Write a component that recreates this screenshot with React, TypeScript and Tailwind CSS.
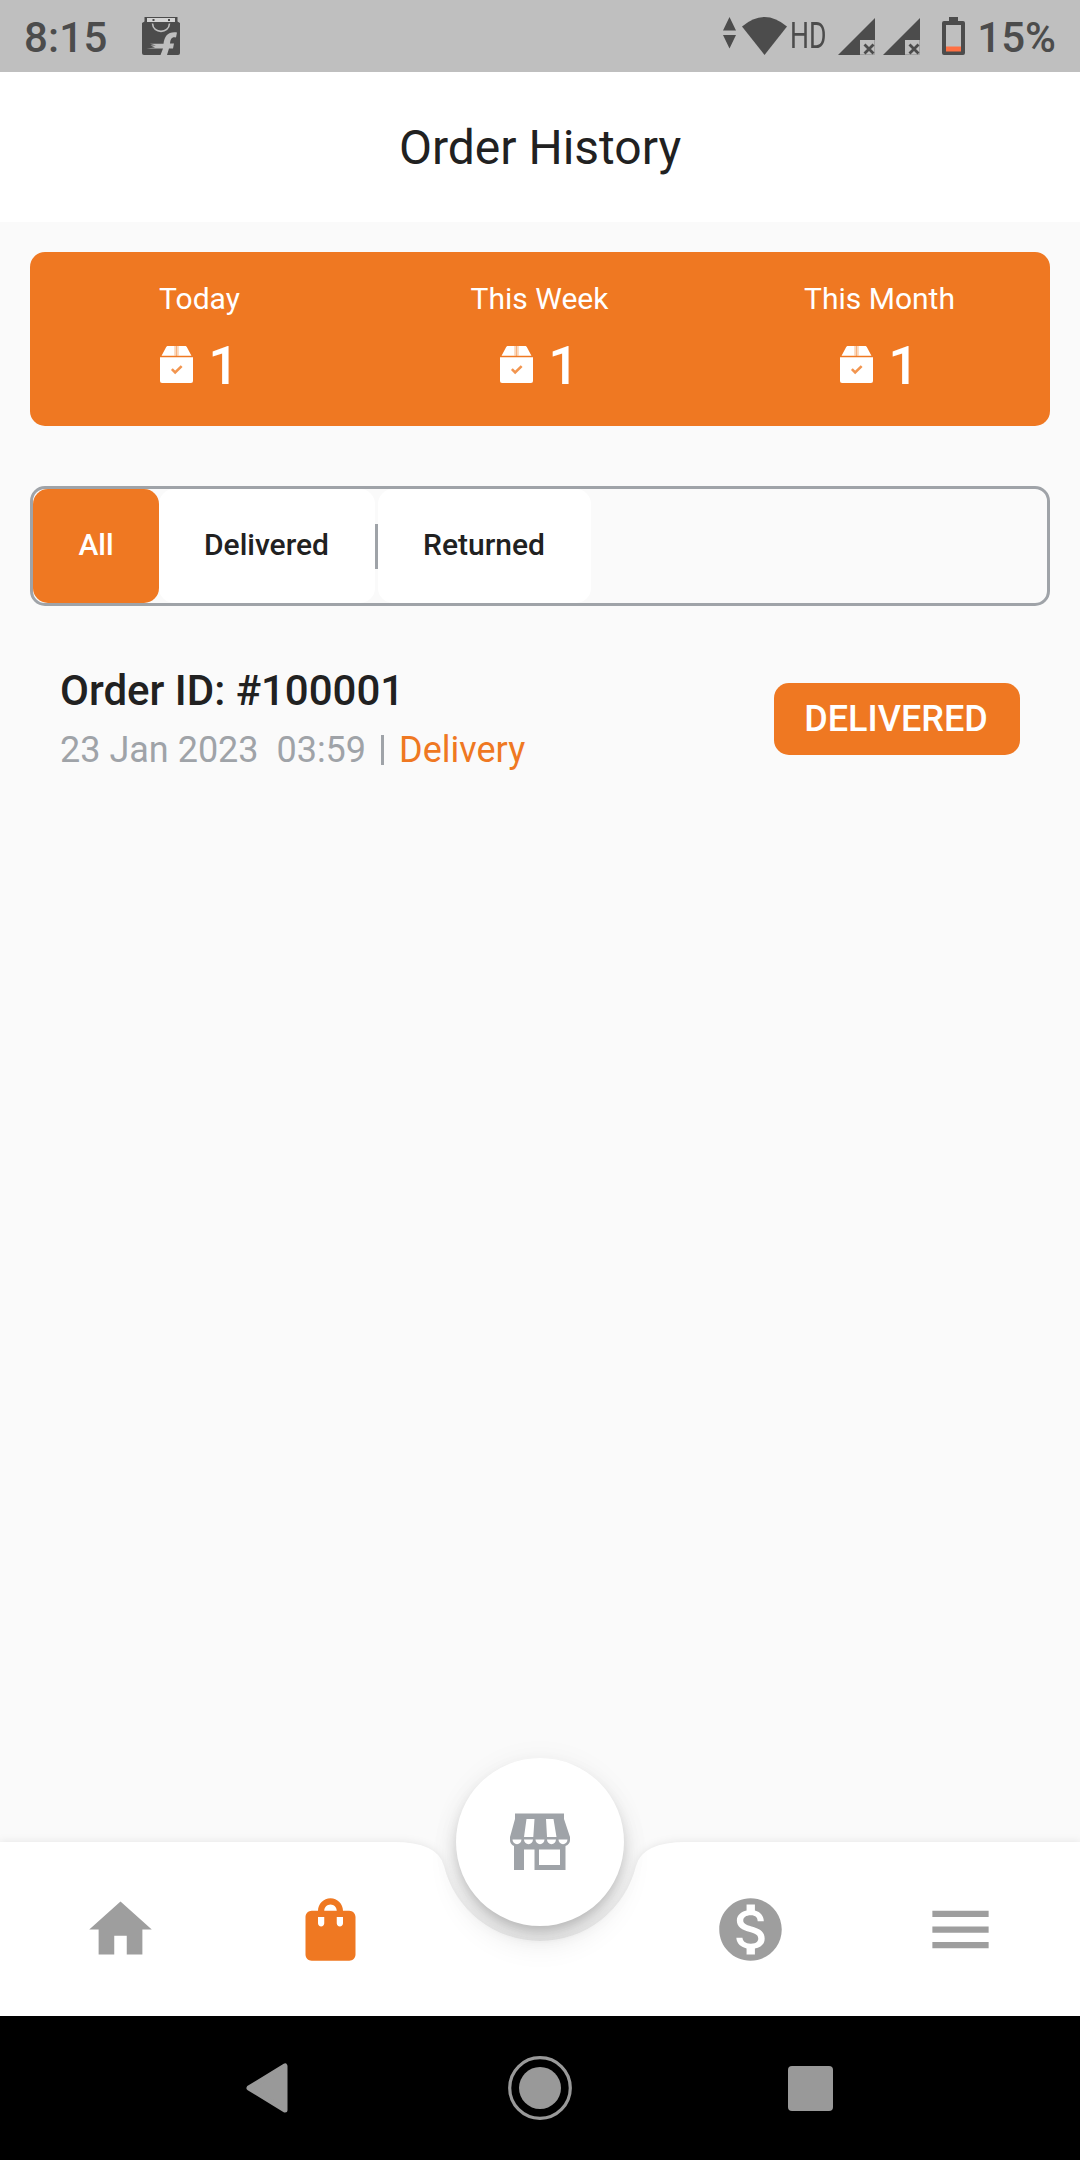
import { MdHome, MdMenu, MdMonetizationOn, MdShoppingBag } from 'react-icons/md'

const stats = [
  { label: 'Today', value: 1 },
  { label: 'This Week', value: 1 },
  { label: 'This Month', value: 1 },
]

const orders = [
  { id: '100001', date: '23 Jan 2023  03:59', type: 'Delivery', status: 'DELIVERED' },
]

function BoxIcon() {
  return (
    <svg width="33" height="37" viewBox="0 0 32 36" preserveAspectRatio="none" className="mb-[3px] shrink-0">
      <path d="M7 0H14V9.5H1.5L5 3Q6 .6 7 0ZM18 0H25Q26 .6 27 3L30.500 9.500H18Z" fill="#fff" />
      <path d="M14 0h4v9.500h-4z" fill="#f7b27d" />
      <path d="M14 0h1v9.500h-1zM17 0h1v9.500h-1z" fill="#fff" />
      <path d="M0 11H32V34Q32 36 30 36H2Q0 36 0 34Z" fill="#fff" />
      <path d="M11.500 22.500l3.200 3.200L21 19.500" fill="none" stroke="#f2954f" strokeWidth="2.500" />
    </svg>
  )
}

function StoreIcon() {
  return (
    <svg width="60" height="58" viewBox="0 0 60 58">
      <path
        fillRule="evenodd"
        fill="#9fa3a8"
        d="M5 .5H54V6L60 24V27Q60 31 55.500 33V57H4V33Q0 31 0 27V24L5 6ZM16.500 6L14 24H23.300L24.500 6ZM36 6L37 24H46.500L43.500 6ZM14 36.500V57H24.500V36.500ZM29 36.500V52H50V36.500Z"
      />
      {[7, 18.5, 30, 41.5, 53].map(x => (
        <path key={x} d={`M${x - 4.5} 26.500h9a4.500 4.700 0 0 1-9 0z`} fill="#fff" />
      ))}
    </svg>
  )
}

function ShopBagIcon() {
  return (
    <svg width="38" height="38" viewBox="0 0 38 38">
      <path d="M2.500 0h33v5h-33z" fill="#4c4c4c" />
      <path d="M0 6L2.500 4.500H35.500L38 6V36Q38 38 36 38H2Q0 38 0 36Z" fill="#4c4c4c" />
      <path d="M5 1h28v4H5z" fill="#d4d4d4" />
      <path d="M10.500 3h2M26 3h2" stroke="#4c4c4c" strokeWidth="1.800" />
      <path d="M10.500 6.500C11 17 27 17 27.500 6.500" fill="none" stroke="#bfbfbf" strokeWidth="1.600" />
      <path d="M18.500 38L21 31.500H4.500L13 30.500 8.500 28.500H14L8 26.800H21.500C22.500 19 26 14.500 35 15.500L34 20.500C30 19.500 28.500 21.500 28 26.500H32L31 31.500H27L25 38Z" fill="#bfbfbf" />
    </svg>
  )
}

function SignalIcon() {
  return (
    <svg width="37" height="37" viewBox="0 0 37 37">
      <path d="M37 0V22H22V37H0Z" fill="#4c4c4c" />
      <path d="M22 36.500H36.500V22" fill="none" stroke="#999" strokeWidth=".8" />
      <path d="M26.500 26.500l9 9M35.500 26.500l-9 9" stroke="#4c4c4c" strokeWidth="2.800" />
    </svg>
  )
}

function StatusBar() {
  return (
    <div className="flex h-[72px] items-center bg-[#bfbfbf] pl-[24px] pr-[24px] text-[#4c4c4c]">
      <span className="pt-[3px] text-[42px] font-medium leading-none tracking-[0.2px]">8:15</span>
      <span className="ml-[34px]">
        <ShopBagIcon />
      </span>
      <div className="ml-auto flex items-center">
        <svg width="13" height="32" viewBox="0 0 13 32" className="mb-[7px]">
          <path d="M6.500 0L13 13.500H0ZM0 18H13L6.500 31.500Z" fill="#4c4c4c" />
        </svg>
        <svg width="45" height="38" viewBox="0 0 45 38" className="ml-[6px]">
          <path d="M0 9.500Q22.500-9.500 45 9.500L22.500 38Z" fill="#4c4c4c" />
        </svg>
        <span className="ml-[3px] flex w-[37px] items-center">
          <span className="origin-left scale-x-[0.74] text-[36px] leading-none">HD</span>
        </span>
        <span className="ml-[11px] flex gap-2">
          <SignalIcon />
          <SignalIcon />
        </span>
        <svg width="23" height="38" viewBox="0 0 23 38" className="ml-[22px]">
          <path fillRule="evenodd" d="M7 0H16V4H21Q23 4 23 6V36Q23 38 21 38H2Q0 38 0 36V6Q0 4 2 4H7ZM4 8V34H19V8Z" fill="#4c4c4c" />
          <path d="M4 29.500h15V34.500H4z" fill="#ff7043" />
        </svg>
        <span className="ml-[12px] pt-[3px] text-[42px] font-medium leading-none">15%</span>
      </div>
    </div>
  )
}

function BottomNav() {
  return (
    <div className="relative h-[174px]">
      {/* Bar with the circular notch cut out under the floating button */}
      <svg
        width="1080"
        height="174"
        viewBox="0 0 1080 174"
        className="absolute inset-0 overflow-visible drop-shadow-[0_0_4px_rgba(0,0,0,0.09)]"
      >
        <path
          d="M0 0H393Q438 0 443.900 23.800A99 99 0 0 0 636.100 23.800Q642 0 687 0H1080V174H0Z"
          fill="#fff"
        />
      </svg>
      <div className="absolute -top-[84px] left-[456px] flex size-[168px] items-center justify-center rounded-full bg-white shadow-[0_9px_15px_-3px_rgba(0,0,0,0.2),0_18px_30px_0_rgba(0,0,0,0.08),0_3px_30px_0_rgba(0,0,0,0.05)]">
        <StoreIcon />
      </div>
      <div className="relative flex h-full items-center px-[15px] text-[75px] text-[#9e9e9e]">
        <span className="flex flex-1 justify-center"><MdHome /></span>
        <span className="flex flex-1 justify-center text-[#ef7822]"><MdShoppingBag /></span>
        <span className="flex-1" />
        <span className="flex flex-1 justify-center"><MdMonetizationOn /></span>
        <span className="flex flex-1 justify-center"><MdMenu /></span>
      </div>
    </div>
  )
}

function SystemNav() {
  return (
    <div className="flex h-36 items-center bg-black">
      <svg width="42" height="50" viewBox="0 0 42 50" className="ml-[246px]">
        <path d="M3 25L39 3V47Z" fill="#999" stroke="#999" strokeWidth="5" strokeLinejoin="round" />
      </svg>
      <svg width="64" height="64" viewBox="0 0 64 64" className="ml-[219.5px]">
        <circle cx="32" cy="32" r="30.300" fill="none" stroke="#999" strokeWidth="3.200" />
        <circle cx="32" cy="32" r="21" fill="#999" />
      </svg>
      <div className="ml-[216px] size-[45px] rounded-[4px] bg-[#999]" />
    </div>
  )
}

export default function App() {
  return (
    <div className="flex h-[2160px] w-[1080px] flex-col overflow-hidden bg-[#fafafa] font-[Roboto,sans-serif] text-[#212121]">
      <StatusBar />
      <header className="flex h-[150px] items-center justify-center bg-white pt-[2px] text-[48px]">Order History</header>

      <main className="flex-1 p-[30px]">
        <div className="grid h-[174px] grid-cols-3 rounded-[15px] bg-[#ef7822] text-center text-white">
          {stats.map(s => (
            <div key={s.label} className="pr-px pt-[29px]">
              <p className="text-[30px] leading-9">{s.label}</p>
              <div className="mt-4 flex items-center justify-center gap-[15px]">
                <BoxIcon />
                <span className="pt-px text-[54px] font-medium leading-[64px]">{s.value}</span>
              </div>
            </div>
          ))}
        </div>

        <div className="mt-[60px] flex h-[120px] items-center rounded-[15px] border-[3px] border-[#9fa3a8] text-[30px] font-medium">
          <button className="h-full w-[126px] rounded-[15px] bg-[#ef7822] pb-[3px] text-white">All</button>
          <button className="h-full w-[216px] rounded-[15px] bg-white pb-[3px] pr-px">Delivered</button>
          <div className="h-[45px] w-[3px] bg-[#9fa3a8]" />
          <button className="h-full w-[213px] rounded-[15px] bg-white pb-[3px] pr-px">Returned</button>
        </div>

        {orders.map(o => (
          <div key={o.id} className="mt-[60px] flex items-center justify-between px-[30px]">
            <div>
              <p className="text-[42px] font-medium leading-[50px]">Order ID: #{o.id}</p>
              <div className="mt-[13px] flex items-center text-[36px] leading-[42px]">
                <span className="whitespace-pre text-[#9fa3a8]">{o.date}</span>
                <span className="mx-[15px] h-[30px] w-[3px] bg-[#9fa3a8]" />
                <span className="text-[#ef7822]">{o.type}</span>
              </div>
            </div>
            <span className="flex h-[72px] w-[246px] items-center justify-center rounded-[15px] bg-[#ef7822] pr-[2px] text-[36px] font-medium text-white">
              {o.status}
            </span>
          </div>
        ))}
      </main>

      <BottomNav />
      <SystemNav />
    </div>
  )
}
